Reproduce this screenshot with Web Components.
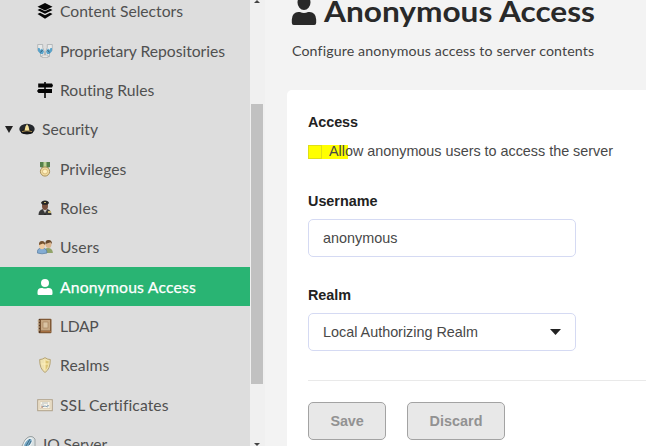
<!DOCTYPE html>
<html lang="en"><head><meta charset="utf-8"><title>Anonymous Access</title>
<style>html,body{margin:0;height:446px;overflow:hidden;background:#f3f3f3}body{font-family:Lato,"Open Sans",sans-serif;color:#444}</style></head>
<body><admin-shell></admin-shell>
<script>
const icons={
layers:'<g fill="#050505"><path d="M8 0 15.500 3.700 8 7.400.5 3.700z"/><path d="M.5 7 3 5.800 8 8.300l5-2.500L15.500 7 8 10.800z"/><path d="M.5 11 3 9.800 8 12.300l5-2.500L15.500 11 8 15.800z"/></g>',
feet:'<g fill="#e8eaea" stroke="#a3a8aa" stroke-width=".7"><path d="M.7 1.500h5v3L7.500 9v4.500h-4V10L.7 7.500z"/><path d="M15.300 1.500h-5v3L8.500 9v4.500h4V10l2.800-2.500z"/></g><g fill="#5ba4cb"><path d="M1 5h1.500l1 2 1.500-1.500L7 8.500 6 11H3.500L1 8z"/><path d="M15 5h-1.500l-1 2L11 5.500 9 8.500l1 2.500h2.500L15 8z"/></g><path d="M3.500 9.500 5.500 7M12.500 9.500 10.500 7" stroke="#35617a"/><path d="M5 12h6v2.500H5z" fill="#e9e9e7" stroke="#aaa" stroke-width=".6"/>',
signs:'<path fill="#050505" d="M7.200 0h1.600v1.500H15L16 3.400 15 5.500H1.200V1.500h6zM7.200 5h1.600v2H15v4H1.500L0 9 1.500 7h5.700zM7.200 10.500h1.600V16H7.200z"/>',
cap:'<ellipse cx="8" cy="8" rx="7.700" ry="5.300" fill="#25282d"/><path d="M3 9q5-3 10 0l1 3q-6 2.500-12 0z" fill="#171717"/><path d="M3 10.500q5-1.500 10 0" stroke="#a88b4d" fill="none"/><path d="M8 3 9.500 5.500 10.500 9.500h-5L6.500 5.500z" fill="#f2df98"/>',
medal:'<path d="M3 1h10v5l-3 1H6L3 6z" fill="#56804a"/><path d="M6.500 1h3v5h-3z" fill="#bad294"/><circle cx="8" cy="10.500" r="4.600" fill="#f2dda5" stroke="#aa9057"/><circle cx="8" cy="10.500" r="2.500" fill="#fff0c1" stroke="#d8bc7b"/>',
officer:'<path d="M1.500 15q0-5 4.500-6h4q4.500 1 4.500 6z" fill="#3a3a3a"/><path d="m6 9 2 5 2-5" fill="#e4e2df"/><path d="m8 10 .8 5H7.200z" fill="#222"/><ellipse cx="8" cy="6" rx="3" ry="4" fill="#79503e"/><path d="M4 3Q4.500 .500 8 .500t4 2.500L10.500 4.800h-5z" fill="#262626"/><path d="M7 2h2v1H7zM11 11h3v2h-3z" fill="#c8b56f"/>',
users:'<path d="M7 14q0-5 4-5t4.800 4v1z" fill="#91a36a"/><ellipse cx="11.500" cy="5" rx="3" ry="4" fill="#d9b48d"/><path d="M8.500 5q-.5-4 3-4t3.500 4l-1.500-1.800z" fill="#65482d"/><path d="M.3 14q-.3-5 4.700-5t5 5q-5 1.600-9.700 0" fill="#83acd3" stroke="#557a9d" stroke-width=".7"/><ellipse cx="5" cy="6.500" rx="2.900" ry="3.700" fill="#efca9f"/><path d="M2 6q-.3-4 3-4t3.200 4L6 4.500z" fill="#76522f"/>',
person:'<path fill="currentColor" d="M8 0a4 4 0 1 1 0 8 4 4 0 0 1 0-8M4.500 9h1a6 6 0 0 0 5 0h1A4 4 0 0 1 15.500 13v1.800Q15.500 16 14.300 16H1.700Q.5 16 .5 14.800V13A4 4 0 0 1 4.500 9"/>',
book:'<rect x="1.500" y=".700" width="13" height="14.500" rx="1" fill="#805935"/><path d="M4 2h9v10.500H4z" fill="#c5a782"/><path d="M6 4h5v6H6z" fill="#d9c3a3" stroke="#aa8863" stroke-width=".7"/><path d="M2.700 1v14" stroke="#4d321f"/><path d="M.5 3H3M.5 6H3M.5 9H3M.5 12H3" stroke="#c9ae88"/><path d="M4 13.500h10" stroke="#a67042"/>',
shield:'<path d="M8 .700q3 2 5.300 1.800Q13.500 12 8 15.500 2.500 12 2.700 2.500 5 2.700 8 .700z" fill="#efe2b0" stroke="#b5a375"/><path d="M8 3q2 1.200 3.700 1.300Q11.500 10.500 8 13.500z" fill="#dcc475"/><path d="M8 3v10M4.500 7h7" stroke="#fff0b9"/>',
cert:'<rect x=".700" y="2.700" width="14.600" height="11" fill="#f0e5cf" stroke="#afa189"/><rect x="3" y="4.700" width="10" height="7" fill="#faf6eb" stroke="#d5c5aa" stroke-width=".7"/><path d="M5 6h6M4 8h3" stroke="#a5b0b2" stroke-width=".8"/><path d="m5 10 3-1 3 1M10 8l2 1" stroke="#6c8da8" fill="none" stroke-width=".8"/><path d="M4 10h2" stroke="#b4785e"/>',
server:'<path d="M1 12 5 4q4-5 8-3l2 2v7l-6 7H3z" fill="#d6dfe1" stroke="#9ca2a3"/><ellipse cx="8" cy="7" rx="3" ry="5.500" transform="rotate(38 8 7)" fill="#7aabc6" stroke="#f2f4f4"/><path d="m6 10 4-7M9 9l2-4" stroke="#3e6b88"/>'
};
class UiIcon extends HTMLElement{connectedCallback(){const r=this.attachShadow({mode:'open'});r.innerHTML=`<style>:host{display:block;flex:none;width:16px;height:16px}svg{display:block;width:100%;height:100%}</style><svg viewBox="0 0 16 16" preserveAspectRatio="none">${icons[this.getAttribute('name')]}</svg>`}}
customElements.define('ui-icon',UiIcon);
/* A single-line label fitted to a given measure, by letter spacing or by stretching. */
class FitText extends HTMLElement{connectedCallback(){const r=this.attachShadow({mode:'open'});r.innerHTML='<style>:host{display:block;white-space:nowrap;flex:none}span{display:inline-block;transform-origin:0 50%}</style><span><slot></slot></span>';const s=r.querySelector('span'),w=+this.getAttribute('measure'),n=s.getBoundingClientRect().width;if(this.hasAttribute('stretch'))s.style.transform=`scaleX(${w/n})`;else s.style.letterSpacing=(w-n)/this.textContent.length+'px'}}
customElements.define('fit-text',FitText);
class NavItem extends HTMLElement{connectedCallback(){const a=n=>this.getAttribute(n),r=this.attachShadow({mode:'open'}),top=this.hasAttribute('top');r.innerHTML=`<style>:host{display:flex;box-sizing:border-box;height:39.33px;align-items:center;padding-left:${top?20:37}px;font-size:15.7px;line-height:20px;color:#505050}
:host([selected]){background:#29b473;color:#fff;-webkit-text-stroke:.25px #fff}:host([open]){padding-left:5px}i{width:0;height:0;border:solid transparent;border-width:7px 4.500px 0;border-top-color:#222;margin-right:6px}ui-icon{margin-right:7px}</style>${this.hasAttribute('open')?'<i></i>':''}<ui-icon name="${a('icon')}"></ui-icon><fit-text measure="${a('measure')}">${a('label')}</fit-text>`}}
customElements.define('nav-item',NavItem);
class ScrollTrack extends HTMLElement{connectedCallback(){this.attachShadow({mode:'open'}).innerHTML='<style>:host{display:flex;flex-direction:column;align-items:center;justify-content:space-between;width:15px;height:446px;background:#f0f0f0;box-sizing:border-box;padding-right:1px}i{width:0;border:solid transparent}.u{border-width:0 3.500px 3px;border-bottom-color:#444}.d{border-width:3px 3.500px 0;border-top-color:#444}.t{width:12px;height:280px;background:#c1c1c1;margin-top:41px}</style><i class="u"></i><div class="t"></div><i class="d"></i>'}}
customElements.define('scroll-track',ScrollTrack);
class FormField extends HTMLElement{connectedCallback(){const a=n=>this.getAttribute(n),sel=this.hasAttribute('select');this.attachShadow({mode:'open'}).innerHTML=`<style>:host{display:block}.label{font-weight:bold;color:#222;line-height:20px}.box{margin-top:8px;box-sizing:border-box;width:268px;height:38px;border:1px solid #d5daf3;border-radius:5px;background:#fff;padding:0 14px;display:flex;justify-content:space-between;align-items:center}svg{width:11px;height:6px}</style><fit-text class="label" measure="${a('lm')}">${a('label')}</fit-text><div class="box"><fit-text measure="${a('vm')}">${a('value')}</fit-text>${sel?'<svg viewBox="0 0 11 6"><path d="M0 0h11L5.500 6z" fill="#222"/></svg>':''}</div>`}}
customElements.define('form-field',FormField);
class ActionButton extends HTMLElement{connectedCallback(){this.attachShadow({mode:'open'}).innerHTML=`<style>:host{display:block}button{font:inherit;font-weight:bold;color:#929292;background:#e8e8e8;border:1px solid #a3a3a3;border-radius:5px;box-sizing:border-box;height:38px;width:100%;padding:0 0 1px;display:flex;align-items:center;justify-content:center}</style><button disabled><fit-text measure="${this.getAttribute('measure')}">${this.textContent}</fit-text></button>`}}
customElements.define('action-button',ActionButton);
class AdminShell extends HTMLElement{connectedCallback(){
const items=[['layers','Content Selectors',123],['feet','Proprietary Repositories',165],['signs','Routing Rules',94.5],['cap','Security',56,'top open'],['medal','Privileges',66.5],['officer','Roles',38],['users','Users',39.5],['person','Anonymous Access',136,'selected'],['book','LDAP',38.5],['shield','Realms',49.5],['cert','SSL Certificates',108.5],['server','IQ Server',64,'top']];
this.attachShadow({mode:'open'}).innerHTML=`<style>:host{display:flex;width:646px;height:446px;overflow:hidden}
nav{width:250px;flex:none;height:446px;background:#ddd;overflow:hidden}.list{margin-top:-8.300px}scroll-track{flex:none}
main{flex:1;min-width:0;height:446px;padding-left:22px;overflow:hidden;box-sizing:border-box}
header{padding-left:5px;height:90px;overflow:hidden}h1{margin:-8px 0 0;display:flex;height:38px;align-items:center;font-size:28.500px;line-height:38px;color:#292929}h1 ui-icon{width:26px;height:30px;margin:-2px 7px 0 -1px}header p{margin:11px 0 0;font-size:14.200px;line-height:20px}
section{background:#fff;height:356px;border-radius:5px 0 0 0;padding:22px 0 0 21px;box-sizing:border-box;font-family:"Liberation Sans",Arial,sans-serif;font-size:14.400px;color:#484848}
.label{font-weight:bold;color:#222;line-height:20px}.check{display:flex;align-items:center;height:20px;margin-top:9px}.hl{width:40px;height:14px;margin:1px -19px 0 0;background:#ff0;display:flex}.hl i{box-sizing:border-box;width:14px;height:14px;border:1px solid #dfdf16}.check fit-text{position:relative}
.user{margin-top:30px}.realm{margin-top:28px}hr{border:0;border-top:1px solid #e9e9e9;margin:29px 0 21px}.actions{display:flex;gap:21px}</style>
<nav><div class="list">${items.map(x=>`<nav-item icon="${x[0]}" label="${x[1]}" measure="${x[2]}" ${x[3]||''}></nav-item>`).join('')}</div></nav><scroll-track></scroll-track>
<main><header><h1><ui-icon name="person"></ui-icon><fit-text stretch measure="271">Anonymous Access</fit-text></h1><p><fit-text measure="302">Configure anonymous access to server contents</fit-text></p></header>
<section><fit-text class="label" measure="50">Access</fit-text><div class="check"><span class="hl"><i></i></span><fit-text measure="284">Allow anonymous users to access the server</fit-text></div>
<form-field class="user" label="Username" lm="69.5" value="anonymous" vm="74.5"></form-field><form-field class="realm" select label="Realm" lm="43" value="Local Authorizing Realm" vm="155"></form-field><hr><div class="actions"><action-button measure="33" style="width:78px">Save</action-button><action-button measure="53" style="width:98px">Discard</action-button></div></section></main>`}}
customElements.define('admin-shell',AdminShell);
</script></body></html>
